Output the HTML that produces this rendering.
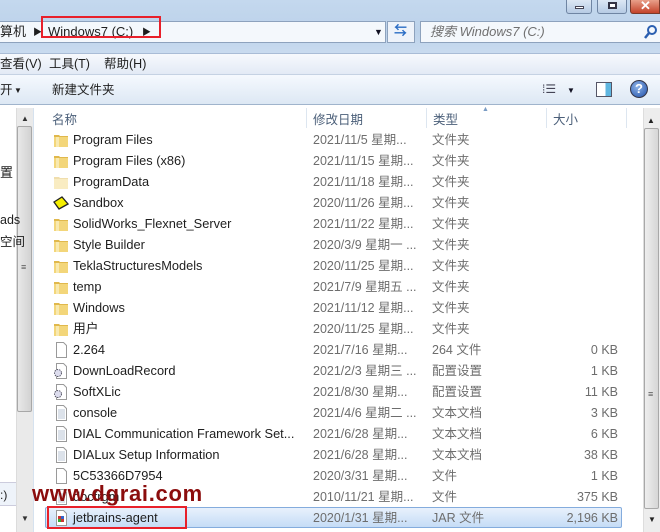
<!DOCTYPE html>
<html><head><meta charset="utf-8">
<style>
*{margin:0;padding:0;box-sizing:border-box}
body{width:660px;height:532px;overflow:hidden;background:#fff;font-family:"Liberation Sans","Noto Sans CJK SC",sans-serif;font-size:12px;color:#1e1e1e;position:relative}
.abs{position:absolute}
.top{left:0;top:0;width:660px;height:53px;background:linear-gradient(#c4d8ee,#bcd2ea 60%,#c9dbef)}
.addr{left:0;top:21px;width:386px;height:22px;background:#f4f8fc;border:1px solid #8da2bd;border-left:none}
.search{left:420px;top:21px;width:240px;height:22px;background:#f4f8fc;border:1px solid #8da2bd;border-right:none}
.menu{left:0;top:53px;width:660px;height:22px;background:linear-gradient(#f7f9fd,#e3eaf5);border-top:1px solid #a9bcd6;border-bottom:1px solid #c5d2e3}
.tool{left:0;top:75px;width:660px;height:30px;background:linear-gradient(#f5f9fe,#dde8f4);border-bottom:1px solid #a0b4cc}
.t{position:absolute;white-space:nowrap;line-height:14px}
.row{position:absolute;left:34px;width:608px;height:21px}
.row span{position:absolute;top:3px;white-space:nowrap;line-height:14px;font-size:12.5px}
.row .n{font-size:12.8px}
.n{left:39px;color:#1e1e1e}
.d{left:279px;color:#6d6d6d}
.y{left:398px;color:#6d6d6d}
.s{right:24px;color:#6d6d6d}
.ic{position:absolute;left:19px;top:2px}
</style></head><body>
<div class="abs top"></div>
<div class="abs" style="left:566px;top:0;width:26px;height:14px;border:1px solid #6f85a3;border-top:none;border-radius:0 0 3px 3px;background:linear-gradient(#dce7f4,#b6cbe4)"><div class="abs" style="left:8px;top:6px;width:9px;height:3px;background:#fff;border:1px solid #445"></div></div>
<div class="abs" style="left:597px;top:0;width:30px;height:14px;border:1px solid #6f85a3;border-top:none;border-radius:0 0 3px 3px;background:linear-gradient(#dce7f4,#b6cbe4)"><div class="abs" style="left:10px;top:2px;width:9px;height:7px;border:2px solid #334;background:#fff"></div></div>
<div class="abs" style="left:630px;top:0;width:30px;height:14px;border:1px solid #7a3a2a;border-top:none;border-radius:0 0 0 3px;background:linear-gradient(#e8a08a,#c4432a)"><div class="t" style="left:9px;top:-1px;color:#fff;font-weight:bold;font-size:13px">✕</div></div>
<div class="abs addr"></div>
<div class="t" style="left:0;top:25px;font-size:13px">算机</div>
<div class="t" style="left:33px;top:25px;font-size:9px">▶</div>
<div class="t" style="left:48px;top:25px;font-size:13px">Windows7 (C:)</div>
<div class="t" style="left:142px;top:25px;font-size:9px">▶</div>
<div class="abs" style="left:41px;top:16px;width:120px;height:22px;border:2px solid #e8202a"></div>
<div class="t" style="left:374px;top:25px;font-size:9px;color:#112">▼</div>
<div class="abs" style="left:387px;top:21px;width:28px;height:22px;background:#eef3fa;border:1px solid #8da2bd"></div>
<div class="t" style="left:394px;top:24px;color:#2a6cc4;font-size:13px;font-weight:bold">⇆</div>
<div class="abs search"></div>
<div class="t" style="left:430px;top:25px;font-style:italic;color:#707070;font-size:13px">搜索 Windows7 (C:)</div>
<svg class="abs" style="left:644px;top:24px" width="14" height="16"><circle cx="8" cy="6" r="4" fill="none" stroke="#2b5fb0" stroke-width="2"/><line x1="5" y1="9" x2="1" y2="14" stroke="#2b5fb0" stroke-width="2.5"/></svg>
<div class="abs menu"></div>
<div class="t" style="left:0;top:57px;font-size:12.5px">查看(V)</div>
<div class="t" style="left:49px;top:57px;font-size:12.5px">工具(T)</div>
<div class="t" style="left:104px;top:57px;font-size:12.5px">帮助(H)</div>
<div class="abs tool"></div>
<div class="t" style="left:0;top:83px;font-size:12.5px">开</div>
<div class="t" style="left:14px;top:84px;font-size:8px">▼</div>
<div class="t" style="left:52px;top:83px;font-size:12.5px">新建文件夹</div>
<div class="t" style="left:542px;top:82px;font-size:12px;color:#445">⁞☰</div>
<div class="t" style="left:567px;top:84px;font-size:8px;color:#112">▼</div>
<div class="abs" style="left:596px;top:82px;width:16px;height:15px;border:1px solid #556;background:linear-gradient(90deg,#fff 60%,#5fb6e0 60%)"></div>
<div class="abs" style="left:630px;top:80px;width:18px;height:18px;border-radius:50%;background:radial-gradient(circle at 40% 35%,#8fb4e8,#1f4fa8);border:1px solid #334"><div class="t" style="left:4px;top:1px;color:#fff;font-weight:bold;font-size:13px">?</div></div>
<div class="abs" style="left:16px;top:108px;width:17px;height:424px;background:#eaeaea;border-left:1px solid #dcdcdc"></div>
<div class="t" style="left:21px;top:112px;font-size:8px;color:#333">▲</div>
<div class="abs" style="left:17px;top:126px;width:15px;height:286px;background:linear-gradient(90deg,#e8e8e8,#d2d2d2);border:1px solid #a8a8a8;border-radius:2px"></div>
<div class="t" style="left:21px;top:260px;font-size:9px;color:#555">≡</div>
<div class="t" style="left:21px;top:512px;font-size:8px;color:#333">▼</div>
<div class="t" style="left:0;top:166px;font-size:13px">置</div>
<div class="t" style="left:0;top:213px;font-size:12.5px">ads</div>
<div class="t" style="left:0;top:235px;font-size:12.5px">空间</div>
<div class="abs" style="left:0;top:482px;width:16px;height:24px;background:#eef3fa;border-top:1px solid #ccd;border-bottom:1px solid #ccd"></div>
<div class="t" style="left:0;top:488px;font-size:12px">:)</div>
<div class="abs" style="left:33px;top:108px;width:1px;height:424px;background:#d6e2ef"></div>
<div class="t" style="left:52px;top:113px;color:#4c607a;font-size:12.5px">名称</div>
<div class="t" style="left:313px;top:113px;color:#4c607a;font-size:12.5px">修改日期</div>
<div class="t" style="left:433px;top:113px;color:#4c607a;font-size:12.5px">类型</div>
<div class="t" style="left:553px;top:113px;color:#4c607a;font-size:12.5px">大小</div>
<div class="t" style="left:482px;top:103px;font-size:7px;color:#7a9cc4">▲</div>
<div class="abs" style="left:306px;top:108px;width:1px;height:20px;background:#dde6f0"></div>
<div class="abs" style="left:426px;top:108px;width:1px;height:20px;background:#dde6f0"></div>
<div class="abs" style="left:546px;top:108px;width:1px;height:20px;background:#dde6f0"></div>
<div class="abs" style="left:626px;top:108px;width:1px;height:20px;background:#dde6f0"></div>
<div class="abs" style="left:643px;top:108px;width:17px;height:424px;background:#ededed;border-left:1px solid #ddd"></div>
<div class="t" style="left:647px;top:114px;font-size:8px;color:#222">▲</div>
<div class="abs" style="left:644px;top:128px;width:15px;height:381px;background:linear-gradient(90deg,#eee,#d6d6d6);border:1px solid #a8a8a8;border-radius:2px"></div>
<div class="t" style="left:648px;top:387px;font-size:9px;color:#555">≡</div>
<div class="t" style="left:648px;top:513px;font-size:8px;color:#222">▼</div>
<div class="abs" style="left:45px;top:507px;width:577px;height:21px;border:1px solid #84acdd;border-radius:2px;background:linear-gradient(#e8f1fc,#c5dcf6)"></div>
<div id="rows"></div>
<script>
var F='<svg class="ic" width="16" height="16"><path d="M1 3h5l1 1h8v11H1z" fill="#e0b84c"/><path d="M1 5h14v10H1z" fill="#f3d67a"/><path d="M3 5h3v10H3z" fill="#f8e9b0"/></svg>';
var FL='<svg class="ic" width="16" height="16" opacity=".45"><path d="M1 3h5l1 1h8v11H1z" fill="#e0b84c"/><path d="M1 5h14v10H1z" fill="#f3d67a"/></svg>';
var D='<svg class="ic" width="16" height="16"><path d="M1 7l8-5 6 7-9 5z" fill="#f5ef00" stroke="#222" stroke-width="1.3"/></svg>';
var P='<svg class="ic" width="16" height="16"><path d="M3.5 .5h7l3 3v12h-10z" fill="#fff" stroke="#9a9a9a"/></svg>';
var T='<svg class="ic" width="16" height="16"><path d="M3.5 .5h7l3 3v12h-10z" fill="#fff" stroke="#9a9a9a"/><path d="M5 5h7M5 7h7M5 9h7M5 11h7M5 13h7" stroke="#b8c4d4"/></svg>';
var G='<svg class="ic" width="16" height="16"><path d="M3.5 .5h7l3 3v12h-10z" fill="#fff" stroke="#9a9a9a"/><circle cx="5" cy="10" r="3.5" fill="#dde" stroke="#556" stroke-dasharray="1.5 1"/></svg>';
var J='<svg class="ic" width="16" height="16"><path d="M3.5 .5h7l3 3v12h-10z" fill="#fff" stroke="#9a9a9a"/><rect x="5" y="6" width="6" height="6" fill="#c33"/><rect x="5" y="9" width="3" height="3" fill="#3a3"/><rect x="8" y="6" width="3" height="3" fill="#36c"/></svg>';
var R=[[F,'Program Files','2021/11/5 星期...','文件夹',''],[F,'Program Files (x86)','2021/11/15 星期...','文件夹',''],[FL,'ProgramData','2021/11/18 星期...','文件夹',''],[D,'Sandbox','2020/11/26 星期...','文件夹',''],[F,'SolidWorks_Flexnet_Server','2021/11/22 星期...','文件夹',''],[F,'Style Builder','2020/3/9 星期一 ...','文件夹',''],[F,'TeklaStructuresModels','2020/11/25 星期...','文件夹',''],[F,'temp','2021/7/9 星期五 ...','文件夹',''],[F,'Windows','2021/11/12 星期...','文件夹',''],[F,'用户','2020/11/25 星期...','文件夹',''],[P,'2.264','2021/7/16 星期...','264 文件','0 KB'],[G,'DownLoadRecord','2021/2/3 星期三 ...','配置设置','1 KB'],[G,'SoftXLic','2021/8/30 星期...','配置设置','11 KB'],[T,'console','2021/4/6 星期二 ...','文本文档','3 KB'],[T,'DIAL Communication Framework Set...','2021/6/28 星期...','文本文档','6 KB'],[T,'DIALux Setup Information','2021/6/28 星期...','文本文档','38 KB'],[P,'5C53366D7954','2020/3/31 星期...','文件','1 KB'],[T,'docfrgm','2010/11/21 星期...','文件','375 KB'],[J,'jetbrains-agent','2020/1/31 星期...','JAR 文件','2,196 KB']];
var h='';R.forEach(function(r,i){h+='<div class="row" style="top:'+(130+21*i)+'px">'+r[0]+'<span class="n">'+r[1]+'</span><span class="d">'+r[2]+'</span><span class="y">'+r[3]+'</span><span class="s">'+r[4]+'</span></div>';});
document.getElementById('rows').innerHTML=h;
</script>
<div class="abs" style="left:47px;top:506px;width:140px;height:23px;border:2px solid #e8202a"></div>
<div class="t" style="left:32px;top:482px;font-size:22px;font-weight:bold;color:#8b0d0d;letter-spacing:0.7px;line-height:24px">www.dgrai.com</div>
</body></html>
